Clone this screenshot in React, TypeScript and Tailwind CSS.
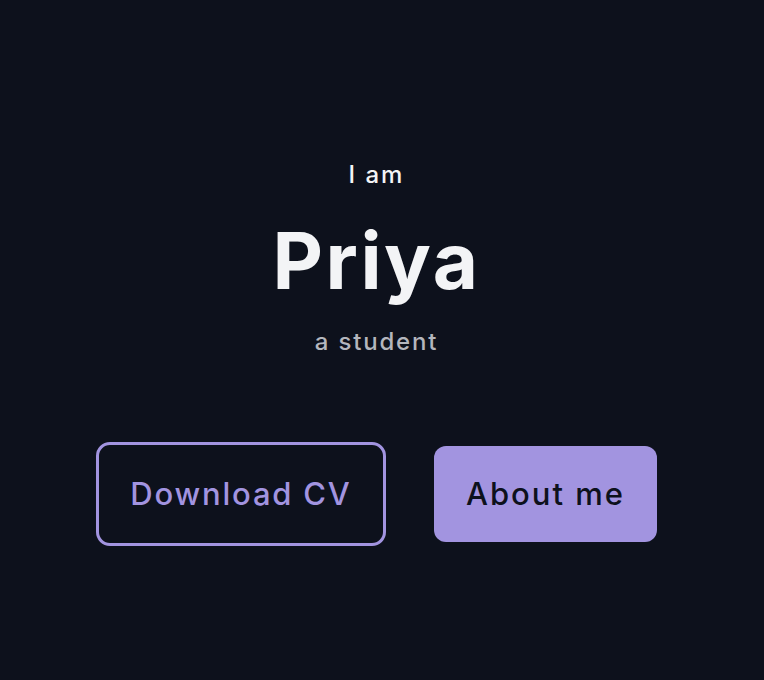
export default function App() {
  return (
    <div
      className="min-h-[680px] w-full bg-[#0d111c] flex flex-col items-center pr-[11px]"
      style={{ fontFamily: 'Inter, "Noto Sans", sans-serif' }}
    >
      <p className="mt-[160px] text-[24px] leading-[30px] font-medium tracking-[2px] text-[#f3f4f6]">I am</p>
      <h1 className="mt-[26px] text-[78px] leading-[90px] font-bold tracking-[2.5px] text-[#f3f4f6]">Priya</h1>
      <p className="mt-[21px] text-[24px] leading-[30px] font-medium tracking-[1.8px] text-[#b4b6bd]">a student</p>
      <div className="mt-[85px] flex items-center gap-[48px]">
        <button className="w-[290px] h-[104px] rounded-[14px] border-[3px] border-[#a294e0] bg-transparent text-[31px] font-medium tracking-[1.8px] text-[#a294e0]">
          Download CV
        </button>
        <button className="w-[223px] h-[96px] rounded-[12px] bg-[#a294e0] text-[31px] font-medium tracking-[2px] text-[#0d111c]">
          About me
        </button>
      </div>
    </div>
  );
}
